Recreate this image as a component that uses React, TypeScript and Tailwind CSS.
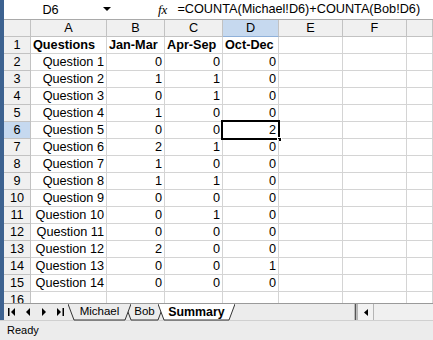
import React from 'react';

const rows: [string, number, number, number][] = [
    ['Question 1', 0, 0, 0],
    ['Question 2', 1, 1, 0],
    ['Question 3', 0, 1, 0],
    ['Question 4', 1, 0, 0],
    ['Question 5', 0, 0, 2],
    ['Question 6', 2, 1, 0],
    ['Question 7', 1, 0, 0],
    ['Question 8', 1, 1, 0],
    ['Question 9', 0, 0, 0],
    ['Question 10', 0, 1, 0],
    ['Question 11', 0, 0, 0],
    ['Question 12', 2, 0, 0],
    ['Question 13', 0, 0, 1],
    ['Question 14', 0, 0, 0],
];

const letters = ['A', 'B', 'C', 'D', 'E', 'F', ''];

function Cell({ children, className = '' }: { children?: React.ReactNode; className?: string }) {
    return (
        <div className={`h-[17px] border-r border-b border-[#d4d4d4] px-[2px] leading-[16px] whitespace-nowrap overflow-hidden ${className}`}>
            {children}
        </div>
    );
}

function RowHead({ n, active }: { n: number; active?: boolean }) {
    return (
        <div className={`h-[17px] border-r border-b border-[#c2c2c2] text-center leading-[16px] ${active ? 'bg-[#c6d9ef]' : 'bg-[#f0f0f0]'}`}>
            {n}
        </div>
    );
}

function Tab({ label, width, active, className = '' }: { label: string; width: number; active?: boolean; className?: string }) {
    const w = width;
    return (
        <div className={`relative h-full flex items-center justify-center ${className}`} style={{ width: w }}>
            <svg className="absolute inset-0" width={w} height={17}>
                <polygon points={`0,0 ${w},0 ${w - 6},16 6,16`} fill={active ? '#ffffff' : '#ececec'} />
                <polyline points={`0,0 6,16 ${w - 6},16 ${w},0`} fill="none" stroke="#333" strokeWidth="1" />
            </svg>
            <span className={`relative ${active ? 'font-bold text-[12.4px]' : 'text-[11.5px]'}`}>{label}</span>
        </div>
    );
}

function NavIcon({ dir, bar }: { dir: 'l' | 'r'; bar?: boolean }) {
    return (
        <svg width="8" height="8" viewBox="0 0 8 8">
            {dir === 'l' ? (
                <>
                    {bar && <rect x="0" y="0" width="1.5" height="8" fill="#000" />}
                    <polygon points={bar ? '7,0 7,8 3,4' : '6,0 6,8 2,4'} fill="#000" />
                </>
            ) : (
                <>
                    <polygon points={bar ? '1,0 1,8 5,4' : '2,0 2,8 6,4'} fill="#000" />
                    {bar && <rect x="6.5" y="0" width="1.5" height="8" fill="#000" />}
                </>
            )}
        </svg>
    );
}

export default function App() {
    return (
        <div className="w-[433px] h-[340px] overflow-hidden bg-[#ececec] flex flex-col text-black font-['Liberation_Sans',Arial,sans-serif] text-[12.7px]">
            <div className="h-[320px] flex flex-col border-l-[4px] border-[#3d6290]">
                {/* formula bar */}
                <div className="h-[20px] flex items-center bg-white border-b border-[#a9a9a9]">
                    <div className="w-[93px] text-center leading-[18px]">D6</div>
                    <svg className="ml-[6px]" width="8" height="5" viewBox="0 0 8 5">
                        <polygon points="0,0 8,0 4,4" fill="#000" />
                    </svg>
                    <span className="ml-[47px] italic font-['Liberation_Serif',serif] text-[13px]">fx</span>
                    <span className="ml-[10px] whitespace-nowrap">=COUNTA(Michael!D6)+COUNTA(Bob!D6)</span>
                </div>

                {/* sheet grid */}
                <div className="h-[283px] overflow-hidden bg-white grid grid-cols-[27px_76px_58px_58px_56px_64px_64px_1fr] content-start">
                    <div className="h-[17px] bg-[#f0f0f0] border-r border-b border-[#c2c2c2]" />
                    {letters.map((l) => (
                        <div
                            key={l || 'g'}
                            className={`h-[17px] border-r border-b border-[#c2c2c2] text-center leading-[16px] ${l === 'D' ? 'bg-[#c6d9ef] border-b-[#8fb0d8]' : 'bg-[#f0f0f0]'}`}
                        >
                            {l}
                        </div>
                    ))}

                    <RowHead n={1} />
                    <Cell className="font-bold">Questions</Cell>
                    <Cell className="font-bold">Jan-Mar</Cell>
                    <Cell className="font-bold">Apr-Sep</Cell>
                    <Cell className="font-bold">Oct-Dec</Cell>
                    <Cell />
                    <Cell />
                    <Cell />

                    {rows.map(([q, a, b, c], i) => {
                        const n = i + 2;
                        const active = n === 6;
                        return (
                            <React.Fragment key={q}>
                                <RowHead n={n} active={active} />
                                <Cell className="text-right">{q}</Cell>
                                <Cell className="text-right">{a}</Cell>
                                <Cell className="text-right">{b}</Cell>
                                <div className="relative">
                                    <Cell className="text-right">{c}</Cell>
                                    {active && (
                                        <>
                                            <div className="absolute -left-[2px] -top-[2px] -right-[1px] -bottom-[1px] border-2 border-black" />
                                            <div className="absolute -right-[3px] -bottom-[3px] w-[5px] h-[5px] bg-black border border-white" />
                                        </>
                                    )}
                                </div>
                                <Cell />
                                <Cell />
                                <Cell />
                            </React.Fragment>
                        );
                    })}

                    <RowHead n={16} />
                    <Cell />
                    <Cell />
                    <Cell />
                    <Cell />
                    <Cell />
                    <Cell />
                    <Cell />
                </div>

                {/* sheet tabs + scrollbar */}
                <div className="h-[17px] flex items-stretch bg-[#ececec] border-t border-[#9a9a9a] text-[11.5px]">
                    <div className="w-[64px] flex items-center gap-[8px] pl-[4px]">
                        <NavIcon dir="l" bar />
                        <NavIcon dir="l" />
                        <NavIcon dir="r" />
                        <NavIcon dir="r" bar />
                    </div>
                    <div className="flex items-stretch">
                        <Tab label="Michael" width={63} className="z-20" />
                        <Tab label="Bob" width={39} className="-ml-[6px] z-10" />
                        <Tab label="Summary" width={77} active className="-ml-[6px] z-30" />
                    </div>
                    <div className="flex-1 flex items-stretch">
                        <div className="w-[119px]" />
                        <div className="w-[3px] border-x border-[#bbb] bg-[#555]" />
                        <div className="w-[17px] flex items-center justify-center bg-[#f2f2f2] border-x border-[#b5b5b5]">
                            <svg width="4" height="7" viewBox="0 0 4 7">
                                <polygon points="4,0 4,7 0,3.5" fill="#000" />
                            </svg>
                        </div>
                        <div className="flex-1 bg-[#f0f0f0]" />
                    </div>
                </div>
            </div>

            {/* status bar */}
            <div className="h-[20px] flex items-center pl-[7px] border-t border-[#d0d0d0] text-[11px]">Ready</div>
        </div>
    );
}
